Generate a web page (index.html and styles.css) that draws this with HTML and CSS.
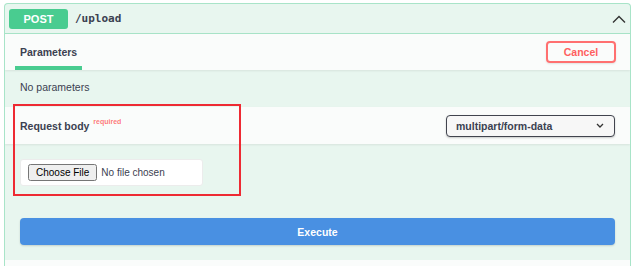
FILE: index.html
```html
<!DOCTYPE html>
<html lang="en">
<head>
  <meta charset="UTF-8">
  <meta name="viewport" content="width=device-width, initial-scale=1.0">
  <title>POST /upload</title>
  <link rel="stylesheet" href="styles.css">
</head>
<body>
  <div class="opblock">
    <div class="opblock-summary">
      <span class="method">POST</span>
      <span class="path">/upload</span>
      <svg class="arrow" width="14" height="8" viewBox="0 0 14 8">
        <polyline points="1,7.5 7,1.5 13,7.5" fill="none" stroke="#333" stroke-width="1.4"/>
      </svg>
    </div>

    <div class="section-header">
      <div class="tab">Parameters</div>
      <button class="btn-cancel">Cancel</button>
    </div>
    <div class="params-body">No parameters</div>

    <div class="section-header body-header">
      <div class="body-title">Request body <span class="required">required</span></div>
      <div class="content-type">
        <span>multipart/form-data</span>
        <svg width="8" height="5" viewBox="0 0 8 5">
          <polyline points="1,1 4,4 7,1" fill="none" stroke="#333" stroke-width="1.3"/>
        </svg>
      </div>
    </div>
    <div class="body-content">
      <div class="file-box">
        <input type="file" name="file">
      </div>
      <button class="btn-execute">Execute</button>
    </div>
    <div class="responses"></div>

    <!-- annotation box -->
    <div class="highlight"></div>
  </div>
</body>
</html>
```

FILE: styles.css
```css
body {
  margin: 0;
  padding: 3px 9px 0 4px;
  background: #fff;
  font-family: "Liberation Sans", Arial, sans-serif;
  color: #3b4151;
}
.opblock {
  position: relative;
  border: 1px solid #a8e4c8;
  border-bottom: none;
  border-radius: 4px 4px 0 0;
  background: #e8f6ef;
  overflow: hidden;
}
.opblock-summary {
  display: flex;
  align-items: center;
  height: 29px;
  padding: 0 4px;
  border-bottom: 1px solid #a8e4c8;
}
.method {
  width: 59px;
  height: 20px;
  line-height: 20px;
  text-align: center;
  background: #49cc90;
  color: #fff;
  font-size: 11px;
  font-weight: bold;
  border-radius: 3px;
}
.path {
  margin-left: 7px;
  font-family: "DejaVu Sans Mono", monospace;
  font-size: 11px;
  font-weight: bold;
  color: #3b4151;
  flex: 1;
}
.section-header {
  display: flex;
  align-items: center;
  justify-content: space-between;
  height: 36px;
  padding: 0 14px 0 10px;
  background: #fafcfb;
  box-shadow: 0 1px 2px rgba(0, 0, 0, 0.08);
}
.tab {
  align-self: stretch;
  display: flex;
  align-items: center;
  padding: 0 5px;
  border-bottom: 4px solid #49cc90;
  margin-top: 4px;
  font-size: 10.5px;
  font-weight: bold;
}
.btn-cancel {
  width: 70px;
  height: 22px;
  background: transparent;
  border: 2px solid #ff7070;
  border-radius: 4px;
  color: #ff6060;
  font-family: inherit;
  font-size: 10.5px;
  font-weight: bold;
  box-shadow: 0 1px 2px rgba(0, 0, 0, 0.1);
}
.params-body {
  height: 37px;
  line-height: 35px;
  padding: 0 15px;
  font-size: 10.5px;
}
.body-header {
  height: 37px;
  padding: 0 15px;
}
.body-title {
  font-size: 10.5px;
  font-weight: bold;
}
.required {
  position: relative;
  top: -6px;
  margin-left: 1px;
  font-size: 7px;
  font-weight: bold;
  color: rgba(255, 0, 0, 0.55);
}
.content-type {
  display: flex;
  align-items: center;
  justify-content: space-between;
  box-sizing: border-box;
  width: 169px;
  height: 22px;
  padding: 0 10px 0 9px;
  border: 1.5px solid #41444e;
  border-radius: 4px;
  background: #f7f7f7;
  box-shadow: 0 1px 2px rgba(0, 0, 0, 0.2);
  font-size: 10.5px;
  font-weight: bold;
}
.body-content {
  padding: 15px;
}
.file-box {
  display: flex;
  align-items: center;
  box-sizing: border-box;
  width: 183px;
  height: 27px;
  padding: 0 7px;
  background: #fff;
  border: 1px solid #ececec;
  border-radius: 3px;
}
.file-box input {
  font-family: "Liberation Sans", Arial, sans-serif;
  font-size: 10px;
  color: #3b4151;
}
.btn-execute {
  display: block;
  width: 100%;
  height: 27px;
  margin-top: 32px;
  background: #4990e2;
  border: none;
  border-radius: 4px;
  color: #fff;
  font-family: inherit;
  font-size: 10.5px;
  font-weight: bold;
  box-shadow: 0 1px 2px rgba(0, 0, 0, 0.15);
}
.responses {
  height: 6px;
  background: #fafcfb;
}
.highlight {
  position: absolute;
  left: 8px;
  top: 100px;
  width: 228px;
  height: 92px;
  box-sizing: border-box;
  border: 2px solid #ee2a33;
}
```
